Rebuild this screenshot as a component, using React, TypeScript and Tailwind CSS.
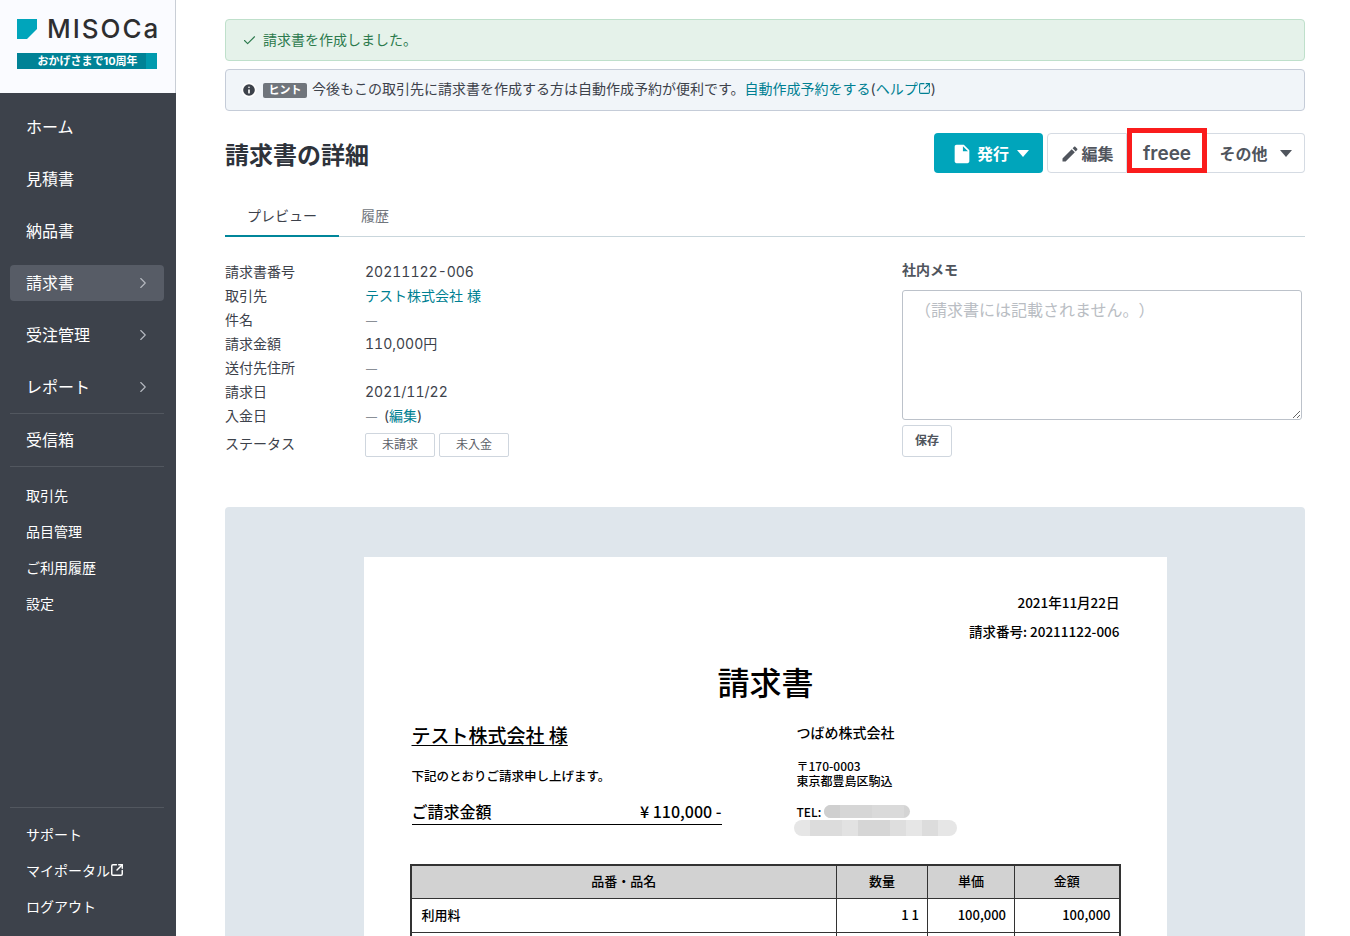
import { Check, ChevronRight, Info, SquareArrowOutUpRight } from "lucide-react";

const FONT = "[font-family:Inter,'Noto_Sans_CJK_JP',sans-serif]";

function Caret({ className }: { className: string }) {
  return (
    <svg viewBox="0 0 12 7" className={className} fill="currentColor">
      <path d="M0 0h12L6 7z" />
    </svg>
  );
}

function NavItem({ label, active, arrow }: { label: string; active?: boolean; arrow?: boolean }) {
  return (
    <div className={`ml-[10px] mr-[12px] h-9 rounded-[4px] px-4 flex items-center justify-between text-[16px] text-white ${active ? "bg-[#575c66]" : ""}`}>
      <span>{label}</span>
      {arrow && <ChevronRight className="h-[18px] w-[18px] text-[#b5b9c0] -mr-[4px]" strokeWidth={1.5} />}
    </div>
  );
}

function SmallItem({ children }: { children: React.ReactNode }) {
  return <div className="h-9 px-[26px] flex items-center text-[14px] text-white">{children}</div>;
}

function Sidebar() {
  return (
    <aside className="w-[176px] shrink-0 h-full bg-[#3d424b] flex flex-col">
      <div className="h-[93px] bg-[#fafbff] border-r border-[#c9ced6] px-[17px] pt-[19px]">
        <div className="flex items-center h-5">
          <svg viewBox="0 0 20 20" className="h-5 w-5 shrink-0">
            <path d="M0 0h20v10L10 20H0z" fill="#00a5bb" />
          </svg>
          <span className="ml-[10px] text-[26px] font-medium leading-5 tracking-[2px] text-[#2e2e30] [font-family:Inter,sans-serif]">MISOCa</span>
        </div>
        <div className="mt-[14px] h-4 w-[140px] bg-[#009aae] text-[11px] font-bold text-white flex items-center">
          <span className="w-[129px] h-full bg-[#008296] flex items-center justify-center pl-3">おかげさまで10周年</span>
        </div>
      </div>
      <div className="pt-4 flex flex-col gap-4">
        <NavItem label="ホーム" />
        <NavItem label="見積書" />
        <NavItem label="納品書" />
        <NavItem label="請求書" active arrow />
        <NavItem label="受注管理" arrow />
        <NavItem label="レポート" arrow />
      </div>
      <div className="ml-[10px] mr-[12px] mt-[8px] border-t border-[#52575f]" />
      <div className="mt-2">
        <NavItem label="受信箱" />
      </div>
      <div className="ml-[10px] mr-[12px] mt-2 border-t border-[#52575f]" />
      <div className="mt-[10px]">
        <SmallItem>取引先</SmallItem>
        <SmallItem>品目管理</SmallItem>
        <SmallItem>ご利用履歴</SmallItem>
        <SmallItem>設定</SmallItem>
      </div>
      <div className="mt-auto pb-3">
        <div className="ml-[10px] mr-[12px] mb-[8px] border-t border-[#52575f]" />
        <SmallItem>サポート</SmallItem>
        <SmallItem>
          マイポータル
          <SquareArrowOutUpRight className="h-[14px] w-[14px]" strokeWidth={2.5} />
        </SmallItem>
        <SmallItem>ログアウト</SmallItem>
      </div>
    </aside>
  );
}

function Row({ label, children }: { label: string; children: React.ReactNode }) {
  return (
    <div className="flex h-6 items-center text-[14px]">
      <div className="w-[140px] text-[#3d424b]">{label}</div>
      <div className="text-[#3d424b]">{children}</div>
    </div>
  );
}

function Num({ children }: { children: React.ReactNode }) {
  return <span className="tabular-nums">{children}</span>;
}

function Dash() {
  return <span className="text-[#8a8f96] text-[11px] ml-[1px]">—</span>;
}

function Badge({ children }: { children: React.ReactNode }) {
  return (
    <span className="w-[70px] h-6 rounded-[2px] border border-[#cfd6de] text-[12px] text-[#5c6068] flex items-center justify-center">
      {children}
    </span>
  );
}

function Invoice() {
  return (
    <div className="mt-[46px] bg-[#dfe6ec] rounded-t-[4px] pt-[50px] flex justify-center h-[429px]">
      <div className="w-[803px] bg-white pl-[48px] pr-[47px] pt-[35px] text-black font-medium [font-family:'Noto_Sans_CJK_JP',sans-serif]">
        <div className="text-right text-[13.5px] leading-5">2021年11月22日</div>
        <div className="text-right text-[13.5px] leading-5 mt-[9px]">請求番号: 20211122-006</div>
        <div className="text-center text-[32px] leading-[48px] mt-4">請求書</div>
        <div className="flex mt-[15px]">
          <div className="w-[385px]">
            <div className="w-[310px]">
              <div className="text-[19px] leading-7 underline underline-offset-2 mt-[1px]">テスト株式会社 様</div>
              <div className="text-[12.5px] leading-5 mt-[17px]">下記のとおりご請求申し上げます。</div>
              <div className="flex justify-between text-[16px] leading-6 mt-[13px] pb-[1px] border-b border-black">
                <span>ご請求金額</span>
                <span>¥ 110,000 -</span>
              </div>
            </div>
          </div>
          <div className="text-[12px] leading-[15px]">
            <div className="text-[14px] leading-5 mt-[2px]">つばめ株式会社</div>
            <div className="mt-4">〒170-0003</div>
            <div>東京都豊島区駒込</div>
            <div className="mt-[17px] flex items-center h-[13px]">
              TEL:
              <span className="ml-[3px] w-[86px] h-[13px] rounded-full overflow-hidden flex bg-[#d4d4d4]">
                <span className="w-4 bg-[#cfcfcf]" />
                <span className="w-8 bg-[#d6d6d6]" />
                <span className="w-8 bg-[#dadada]" />
              </span>
            </div>
            <div className="mt-[2px] -ml-[3px] w-[163px] h-4 rounded-full overflow-hidden flex bg-[#e6e6e6]">
              <span className="w-4" />
              <span className="w-8 bg-[#dcdcdc]" />
              <span className="w-4 bg-[#e2e2e2]" />
              <span className="w-8 bg-[#d6d6d6]" />
              <span className="w-4 bg-[#dedede]" />
              <span className="w-4 bg-[#e6e6e6]" />
              <span className="w-4 bg-[#dcdcdc]" />
            </div>
          </div>
        </div>
        <table className="mt-[28px] w-[711px] -ml-[2px] table-fixed border-collapse border-2 border-[#333] text-[13px]">
          <colgroup>
            <col className="w-[426px]" />
            <col className="w-[91px]" />
            <col className="w-[87px]" />
            <col />
          </colgroup>
          <tbody>
            <tr className="h-[33px] bg-[#d2d2d2] text-center">
              <td className="border border-[#333] pb-[2px]">品番・品名</td>
              <td className="border border-[#333] pb-[2px]">数量</td>
              <td className="border border-[#333] pb-[2px]">単価</td>
              <td className="border border-[#333] pb-[2px]">金額</td>
            </tr>
            <tr className="h-[34px]">
              <td className="border border-[#333] pl-[10px]">利用料</td>
              <td className="border border-[#333] pr-2 text-right">1 1</td>
              <td className="border border-[#333] pr-2 text-right">100,000</td>
              <td className="border border-[#333] pr-2 text-right">100,000</td>
            </tr>
            <tr className="h-[34px]">
              <td className="border border-[#333]" />
              <td className="border border-[#333]" />
              <td className="border border-[#333]" />
              <td className="border border-[#333]" />
            </tr>
          </tbody>
        </table>
      </div>
    </div>
  );
}

export default function App() {
  return (
    <div className={`h-[936px] w-[1350px] overflow-hidden flex bg-white ${FONT}`}>
      <Sidebar />
      <main className="flex-1 min-w-0 pl-[49px] pr-[45px] pt-[19px]">
        <div className="h-[42px] rounded-[4px] border border-[#bfe0cb] bg-[#e5f2ea] px-4 flex items-center text-[14px] text-[#2c7a4d]">
          <Check className="h-[15px] w-[15px] mr-[6px]" strokeWidth={1.75} />
          <span className="pb-[2px]">請求書を作成しました。</span>
        </div>
        <div className="mt-2 h-[42px] rounded-[4px] border border-[#c5ccd8] bg-[#f1f5f9] px-4 flex items-center text-[14px] text-[#3d424b]">
          <Info className="h-4 w-4 -ml-[1px] mr-[6px] fill-[#3d424b] text-white" strokeWidth={2.5} />
          <span className="h-[15px] w-[44px] mr-[5px] rounded-[2px] bg-[#70757c] text-white text-[11px] font-bold flex items-center justify-center">ヒント</span>
          <span className="pb-[3px]">今後もこの取引先に請求書を作成する方は自動作成予約が便利です。</span>
          <span className="pb-[3px] text-[#007f92]">自動作成予約をする</span>
          <span className="pb-[3px]">(</span>
          <span className="pb-[3px] text-[#007f92] flex items-center">ヘルプ<SquareArrowOutUpRight className="h-[13px] w-[13px]" strokeWidth={2} /></span>
          <span className="pb-[3px]">)</span>
        </div>

        <div className="mt-[22px] h-10 flex items-end justify-between">
          <h1 className="text-[24px] font-bold text-[#2e333b] -mb-[1px]">請求書の詳細</h1>
          <div className="flex items-end text-[16px] font-bold">
            <button className="h-10 w-[109px] rounded-[4px] bg-[#00a5bb] text-white flex items-center pl-[17px] pt-[1px]">
              <svg viewBox="0 0 24 24" className="h-[22px] w-[22px]" fill="currentColor">
                <path d="M6 2c-1.1 0-1.99.9-1.99 2L4 20c0 1.1.89 2 1.99 2H18c1.1 0 2-.9 2-2V8l-6-6H6zm7 7V3.5L18.5 9H13z" />
              </svg>
              <span className="ml-1">発行</span>
              <Caret className="w-3 h-[7px] ml-[8px]" />
            </button>
            <button className="ml-1 h-10 w-[80px] rounded-l-[4px] border border-[#d5dbe3] text-[#50555d] flex items-center justify-center pt-[1px]">
              <svg viewBox="0 0 24 24" className="h-5 w-5 mr-[1px]" fill="currentColor">
                <path d="M3 17.25V21h3.75L17.81 9.94l-3.75-3.75L3 17.25zM20.71 7.04c.39-.39.39-1.02 0-1.41l-2.34-2.34c-.39-.39-1.02-.39-1.41 0l-1.83 1.83 3.75 3.75 1.83-1.83z" />
              </svg>
              編集
            </button>
            <button className="h-[45px] w-[80px] border-[5px] border-[#fa1c1c] text-[#50555d] text-[19px] font-semibold flex items-center justify-center pt-2">
              freee
            </button>
            <button className="h-10 w-[98px] rounded-r-[4px] border border-l-0 border-[#d5dbe3] text-[#50555d] flex items-center justify-center gap-[12px] pt-[1px]">
              その他
              <Caret className="w-3 h-[7px]" />
            </button>
          </div>
        </div>

        <div className="mt-[23px] h-[41px] flex border-b border-[#c9d6dc] text-[14px]">
          <div className="w-[114px] h-[41px] border-b-2 border-[#00869a] flex items-center justify-center text-[#3d424b]">プレビュー</div>
          <div className="w-[72px] pb-[1px] flex items-center justify-center text-[#70757c]">履歴</div>
        </div>

        <div className="mt-[22px] flex">
          <div className="w-[677px]">
            <Row label="請求書番号"><Num>20211122-006</Num></Row>
            <Row label="取引先"><span className="text-[#007f92]">テスト株式会社 様</span></Row>
            <Row label="件名"><Dash /></Row>
            <Row label="請求金額"><Num>110,000</Num>円</Row>
            <Row label="送付先住所"><Dash /></Row>
            <Row label="請求日"><Num>2021/11/22</Num></Row>
            <Row label="入金日"><Dash /><span className="ml-[7px]">(</span><span className="text-[#007f92]">編集</span>)</Row>
            <div className="flex items-center text-[14px] h-[32px] mt-[2px] text-[#3d424b]">
              <div className="w-[140px] pb-1">ステータス</div>
              <div className="flex gap-1">
                <Badge>未請求</Badge>
                <Badge>未入金</Badge>
              </div>
            </div>
          </div>
          <div className="w-[400px] mt-[1px]">
            <div className="text-[14px] font-bold leading-5 text-[#50555d]">社内メモ</div>
            <textarea
              readOnly
              placeholder="（請求書には記載されません。）"
              className="mt-[10px] block w-full h-[130px] rounded-[3px] border border-[#bcc2ca] px-3 py-[7px] text-[16px] [text-spacing-trim:space-all] placeholder:text-[#b9bdc3]"
            />
            <button className="mt-[5px] w-[50px] h-8 rounded-[3px] border border-[#cfd6de] text-[12px] font-bold text-[#50555d]">保存</button>
          </div>
        </div>

        <Invoice />
      </main>
    </div>
  );
}
